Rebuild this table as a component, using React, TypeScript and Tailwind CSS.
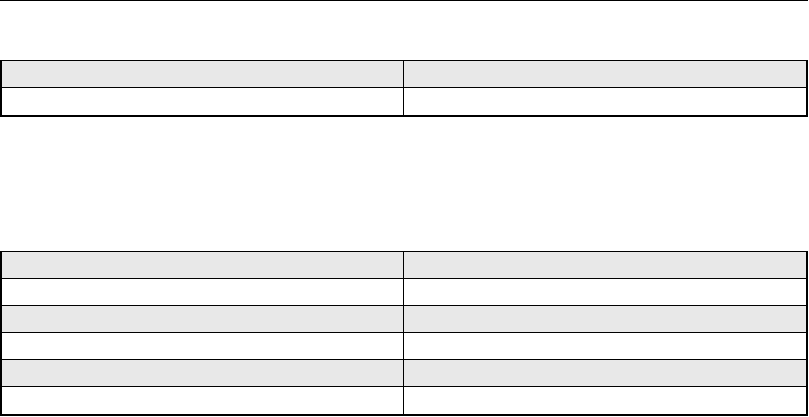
const rows1 = [true, false];
const rows2 = [true, false, true, false, true, false];

function Grid({ rows }: { rows: boolean[] }) {
    return (
        <div className="w-[808px] border-t border-l-2 border-r-2 border-b-2 border-black">
            {rows.map((gray, i) => (
                <div
                    key={i}
                    className={
                        "grid grid-cols-[402px_1fr] h-[27px] " +
                        (i < rows.length - 1 ? "border-b border-black " : "") +
                        (gray ? "bg-[#e8e8e8]" : "bg-white")
                    }
                >
                    <div className="border-r border-black" />
                    <div />
                </div>
            ))}
        </div>
    );
}

export default function App() {
    return (
        <div className="w-[809px] h-[417px] bg-white font-['Liberation_Sans',sans-serif]">
            <div className="w-[808px] border-t border-black" />
            <div className="pt-[59px]">
                <Grid rows={rows1} />
            </div>
            <div className="pt-[134px]">
                <Grid rows={rows2} />
            </div>
        </div>
    );
}
